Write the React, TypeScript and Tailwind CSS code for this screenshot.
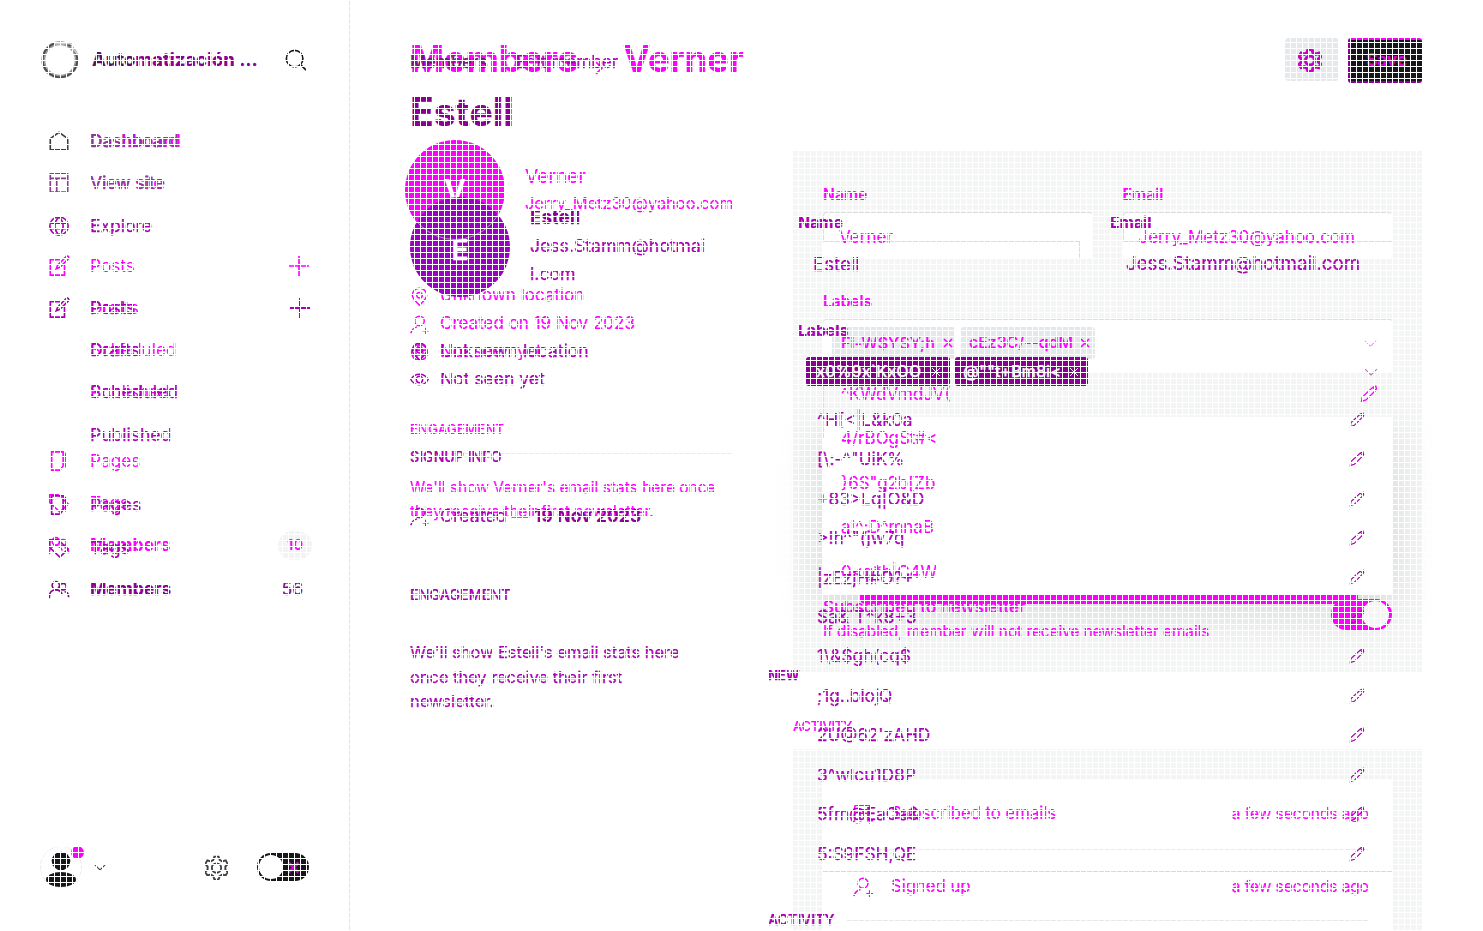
import React from "react";

type IconName =
  | "home" | "view" | "globe" | "posts" | "page" | "tag" | "members" | "plus"
  | "search" | "gear" | "pin" | "user" | "eye" | "pencil" | "down" | "right" | "close" | "mail";

const drawings: Record<IconName, React.ReactNode> = {
  home: <path d="M2.5 21.5V9.5L12 2.5l9.500 7v12z" />,
  view: <path d="M2.500 2h19v20h-19zM2.500 7h19M9.500 7v15" />,
  globe: <path d="M12 2a10 10 0 1 0 0 20 10 10 0 0 0 0-20zM2.500 9h19M2.500 15h19M12 2c-6 6-6 14 0 20M12 2c6 6 6 14 0 20" />,
  posts: <path d="M14 5H2.500v17H18V11M22 1.500l-1.500-.5L10.500 11 9 15l4-1.500L23 3.500z" />,
  page: <path d="M4 2h12.500v15.500L13 22H4zM19.500 3v16" />,
  tag: <path d="M2 3h9l11 10-9 9L2 11.500zM7 7.500v1" />,
  members: <path d="M8.500 4a4 4 0 1 0 0 8 4 4 0 0 0 0-8zM1.500 22v-2c0-5 3.500-7 7-7s6 2 7 5M16.500 6a3.500 3.500 0 1 0 0 7 3.500 3.500 0 0 0 0-7zM18 15c3 0 4.500 2.500 4.500 6" />,
  plus: <path d="M12 1v22M1 12h22" />,
  search: <path d="M10.500 1.500a9 9 0 1 0 0 18 9 9 0 0 0 0-18zM17 17l6 6" />,
  gear: <path d="M10 1.500h4l1 3.200 2.600 1.500 3.200-1 2 3.600-2.300 2.200v3l2.300 2.200-2 3.500-3.200-.9L15 20.300l-1 3.200h-4l-1-3.200-2.600-1.500-3.200.9-2-3.500L3.500 14v-3L1.200 8.800l2-3.600 3.200 1L9 4.700zM12 8a4.500 4.500 0 1 0 0 9 4.500 4.500 0 0 0 0-9z" />,
  pin: <path d="M12 1.500c-5.500 0-9 4-9 9S8.500 19 12 23c3.500-4 9-7.500 9-12.500s-3.500-9-9-9zM12 7a3.500 3.500 0 1 0 0 7 3.500 3.500 0 0 0 0-7z" />,
  user: <path d="M12 1.500a6 6 0 1 0 0 12 6 6 0 0 0 0-12zM1 23c1-4 4-7 8-8M16 20h8M20 16v8" />,
  eye: <path d="M1 12c5-9 17-9 22 0-5 9-17 9-22 0zM12 8a4 4 0 1 0 0 8 4 4 0 0 0 0-8z" />,
  pencil: <path d="M2 22l1-6L17 3l4-1.500L22 5l-1 2L8 20zM17 3l4 4" />,
  down: <path d="M2 7l10 10L22 7" />,
  right: <path d="M7 2l10 10L7 22" />,
  close: <path d="M4 4l16 16M20 4L4 20" />,
  mail: <path d="M2 20V4c0-2 1-2.500 3-2.500h15V14M6 7h11M6 11h11M17 20h7M20.500 16v8" />,
};

function Icon({ name, className, weight = 1.8 }: { name: IconName; className: string; weight?: number }) {
  return (
    <svg viewBox="0 0 24 24" fill="none" stroke="currentColor" strokeWidth={weight} className={`shrink-0 ${className}`}>
      {drawings[name]}
    </svg>
  );
}

function NavRow({ icon, label, className = "", iconClass = "", end }: {
  icon?: IconName; label: string; className?: string; iconClass?: string; end?: React.ReactNode;
}) {
  return (
    <li className={`flex h-[42.250px] items-center pr-[39px] pl-[48px] ${className}`}>
      <span className="flex w-[42px] shrink-0">
        {icon && <Icon name={icon} className={`size-[22px] ${iconClass}`} />}
      </span>
      <span className="grow">{label}</span>
      {end}
    </li>
  );
}

function Meta({ icon, children, className = "" }: { icon: IconName; children: React.ReactNode; className?: string }) {
  return (
    <li className={`flex h-[28px] items-center gap-[11px] whitespace-nowrap ${className}`}>
      <Icon name={icon} className="size-[19px]" weight={1.9} />
      <span>{children}</span>
    </li>
  );
}

function BaseSidebar() {
  return (
    <aside className="flex w-[350px] shrink-0 flex-col border-r border-[#e3e4e6] text-[17.200px]">
      <div className="flex h-[120px] items-center pb-[1px] pl-[41px]">
        <svg viewBox="0 0 38 38" className="size-[38px]" fill="none">
          <circle cx="19" cy="19" r="16.700" stroke="#9a9c9e" strokeWidth="4" />
          <circle cx="19" cy="19" r="17.300" stroke="#484b4d" strokeWidth="1.800" />
          <path d="M13 2.500h18M30 5l7 9" stroke="#c8c9ca" strokeWidth="2" />
        </svg>
        <Icon name="search" className="ml-[206px] size-[22px] text-[#15171a]" />
      </div>
      <ul className="text-[#ff00ff]">
        <NavRow icon="home" iconClass="text-[#394047]" label="Dashboard" className="font-semibold" />
        <NavRow icon="view" label="View site" iconClass="text-[#8a3c8f]" />
        <NavRow icon="posts" label="Posts" className="mt-[40px]" end={<Icon name="plus" className="size-[22px]" />} />
        <NavRow label="Drafts" />
        <NavRow label="Scheduled" />
        <NavRow label="Published" />
        <NavRow icon="page" label="Pages" className="mt-[26px]" />
        <NavRow icon="tag" label="Tags" />
        <NavRow
          icon="members"
          label="Members"
          className="text-[17.400px] font-bold"
          end={<span className="-mr-[2px] flex h-[29px] w-[34px] items-center justify-center rounded-full bg-[#f1f3f4] text-[15px] font-semibold">10</span>}
        />
      </ul>
      <div className="mt-auto mb-[43px] flex h-[42px] items-center pl-[40px]">
        <div className="relative">
          <svg viewBox="0 0 42 42" className="size-[42px]">
            <circle cx="21" cy="21" r="20.500" fill="#fff" stroke="#ededed" />
            <circle cx="21" cy="15" r="9.300" fill="#15171a" />
            <ellipse cx="21" cy="33.500" rx="15" ry="7.500" fill="#15171a" />
          </svg>
          <span className="absolute top-[0px] left-[31px] size-[13px] rounded-full bg-[#ff00ff]" />
        </div>
        <Icon name="down" className="ml-[11px] size-[14px] text-[#394047]" />
        <Icon name="gear" className="ml-[97px] size-[25px] text-[#394047]" />
        <div className="ml-[28px] flex h-[28px] w-[52px] items-center justify-between rounded-full bg-[#15171a] pr-[8px] pl-[2px]">
          <span className="size-[24px] rounded-full bg-white" />
          <Icon name="close" className="size-[15px] text-[#d800d8]" weight={4.5} />
        </div>
      </div>
    </aside>
  );
}

const baseOptions = ["^KWdVmdJV(", "4/rBOgSt#<", '}6S"g2b[Zb', "a!^;D^mnaB", "0<q*h|C4W"];

function Field({ label, value, boxClass }: { label: string; value: string; boxClass: string }) {
  return (
    <div className="w-[270px]">
      <div className="mb-[7px] h-[20px] text-[15.700px] leading-[20px] font-semibold">{label}</div>
      <div className="relative h-[47px] rounded-[4px] bg-white pt-[15px] pl-[16px] text-[17px] leading-[20px] whitespace-nowrap">
        <span className="absolute inset-x-0 top-0 h-[30px] rounded-t-[4px] border border-r-transparent border-b-0 border-[#dcdcdc]" />
        <span className={`absolute left-0 border-[#dcdcdc] ${boxClass}`} />
        <span className="relative">{value}</span>
      </div>
    </div>
  );
}

function BaseMain() {
  return (
    <main className="flex grow flex-col text-[#ff00ff] [-webkit-text-stroke:0.200px_currentColor]">
      <header className="flex h-[151px] justify-between pt-[38px] pr-[61px] pl-[60px]">
        <h1 className="flex h-[42px] items-center text-[36.600px] leading-none font-bold tracking-[-0.200px]">
          Members
          <Icon name="right" className="mt-[18px] mr-[17px] ml-[14px] size-[14px]" weight={3} />
          Verner
        </h1>
        <div className="flex gap-[9px]">
          <div className="flex h-[43px] w-[54px] items-center justify-center rounded-[4px] bg-[#e6e9eb] pr-[4px] text-[#c800c8]">
            <Icon name="gear" className="size-[24px]" weight={3.200} />
          </div>
          <div className="flex h-[45px] w-[74px] items-center justify-center rounded-[3px] border-t-2 border-b-2 border-l-[3px] border-t-[#ff00ff] border-b-[#87008f] border-l-[#87008f] bg-[#15171a] text-[17px] font-bold text-[#e000e0]">
            Save
          </div>
        </div>
      </header>

      <div className="flex grow gap-[61px] pl-[55px]">
        <section className="w-[327px]">
          <div className="-mt-[11px] flex h-[142px]">
            <div className="flex size-[100px] shrink-0 items-center justify-center rounded-full bg-[#ff00ff] text-[30px] font-semibold text-white">
              V
            </div>
            <div className="pt-[23px] pl-[20px]">
              <div className="h-[27px] text-[19.200px] leading-[27px]">Verner</div>
              <div className="text-[16.400px] leading-[27px]">Jerry_Metz30@yahoo.com</div>
            </div>
          </div>
          <ul className="pl-[5px] text-[17px]">
            <Meta icon="pin">Unknown location</Meta>
            <Meta icon="user">Created on 19 Nov 2023</Meta>
            <Meta icon="globe">Not seen yet</Meta>
          </ul>
          <div className="ml-[5px] h-[89px] pt-[53px]">
            <h2 className="h-[35px] border-b border-[#ebebeb] text-[13px] leading-[20px] font-medium tracking-[0.300px]">ENGAGEMENT</h2>
          </div>
          <p className="pt-[21px] pl-[5px] text-[15.500px] leading-[24px] whitespace-nowrap">
            We'll show Verner's email stats here once<br />they receive their first newsletter.
          </p>
        </section>

        <section className="w-[629px]">
          <div className="h-[521px] bg-[#f4f6f6] px-[30px] pt-[34px]">
            <div className="flex gap-[30px]">
              <Field label="Name" value="Verner" boxClass="top-[29px] h-[17px] w-[257px] border-t border-r" />
              <Field label="Email" value="Jerry_Metz30@yahoo.com" boxClass="top-[29px] h-[17px] w-[270px] border-t" />
            </div>
            <div className="mt-[33px] mb-[7px] h-[20px] w-[569px] text-[15.500px] leading-[20px] font-semibold">Labels</div>
            <div className="flex h-[54px] w-[570px] gap-[6px] rounded-t-[4px] border-t border-[#dcdcdc] bg-white pt-[7px] pl-[9px]">
              <span className="flex h-[32px] w-[123px] items-center gap-[7px] rounded-[3px] bg-[#e5e8eb] pl-[9px] text-[16.200px] font-medium whitespace-nowrap">
                Fi-W$YSY;h <Icon name="close" className="size-[12px]" weight={3.500} />
              </span>
              <span className="flex h-[32px] w-[134px] items-center gap-[6px] rounded-[3px] bg-[#e5e8eb] pl-[8px] text-[15.900px] font-medium whitespace-nowrap">
                cEz3C/--qdM <Icon name="close" className="size-[12px]" weight={3.500} />
              </span>
              <Icon name="down" className="mt-[10px] mr-[16px] ml-auto size-[13px]" weight={1.200} />
            </div>
            <div className="relative -mx-[1px] h-[222px] text-[16.900px]">
              <div className="absolute inset-x-0 top-[44px] bottom-0 rounded-b-[3px] bg-white shadow-[0_16px_50px_0px_rgba(0,0,0,0.13)]" />
              <div className="absolute inset-x-0 top-0 h-[44px] bg-[#f3f5f5]" />
              <ul className="relative">
                {baseOptions.map((option, i) => (
                  <li key={option} className="flex h-[44.500px] items-center justify-between pr-[15px] pb-[2px] pl-[19px]">
                    {option}
                    {i === 0 && <Icon name="pencil" className="size-[18px]" />}
                  </li>
                ))}
              </ul>
              <span className="absolute top-0 left-[1px] h-[66px] w-px bg-[#dcdcdc]" />
              <span className="absolute top-[222px] left-[38px] h-[9px] w-[498px] rounded-b-[5px] bg-[#ff00ff]" />
            </div>
            <div className="relative flex justify-between pt-[4px]">
              <div className="-mt-[4px]">
                <div className="h-[24px] text-[17px] leading-[24px] font-medium whitespace-nowrap">Subscribed to newsletter</div>
                <div className="pt-[1px] text-[15.300px] leading-[24px] whitespace-nowrap">If disabled, member will not receive newsletter emails</div>
              </div>
              <div className="flex h-[31px] w-[61px] items-center justify-end rounded-full bg-[#ff00ff] pr-[3px]">
                <span className="size-[27px] rounded-full bg-[#f5f5f5]" />
              </div>
            </div>
          </div>
          <h2 className="h-[77px] pt-[44px] text-[13px] leading-[20px] font-medium tracking-[-0.200px]">ACTIVITY</h2>
          <div className="h-[182px] bg-[#f4f6f6] px-[30px] pt-[30px]">
            <ul className="h-[152px] w-[570px] bg-white px-[24px] text-[16.700px] shadow-[0_0_8px_rgba(0,0,0,0.02)]">
              <li className="ml-[6px] flex h-[71px] items-center border-b border-[#ebebeb]">
                <Icon name="mail" className="mr-[18px] size-[20px]" />
                <span className="grow">Subscribed to emails</span>
                <span className="text-[15.400px]">a few seconds ago</span>
              </li>
              <li className="-mx-[24px] mt-[21px] h-px bg-[#d8d8d8]" />
              <li className="-mt-[20px] ml-[6px] flex h-[70px] items-center">
                <Icon name="user" className="mr-[18px] size-[20px]" />
                <span className="grow">Signed up</span>
                <span className="text-[15.400px]">a few seconds ago</span>
              </li>
              <li className="-mt-[2px] h-px bg-[#e6e8ea]" />
            </ul>
          </div>
        </section>
      </div>
    </main>
  );
}

const topOptions = [
  "^H[<|L&k0a", '[\\:-^"UiK%', "+83>Lq|O&D", '>!h^"(jw7q', "|zEzjH#O?+", "$a&`T*k8+3",
  "1\\&$gh(cq$", ";1g..blojQ", "2U@62'zAHD", "3^wIcu1D8P", "5fm@EaOa&", "5:S9FSH,QE",
];

function TopLayer() {
  return (
    <div className="absolute inset-0 flex text-[17.300px] text-[#a900b4] [-webkit-text-stroke:0.250px_currentColor]">
      <div className="w-[350px] shrink-0">
        <div className="flex h-[120px] items-center pb-[1px] pl-[92px] text-[18.500px] font-bold text-[#8c0091]">
          <span className="text-[#5c1060]">Auto</span>matización ...
        </div>
        <ul className="text-[17.500px]">
          <NavRow label="Dashboard" className="text-[17.200px] text-[#8b3a90]" />
          <NavRow label="View site" className="text-[17.600px] text-[#8b3a90]" />
          <NavRow icon="globe" label="Explore" />
          <NavRow icon="posts" label="Posts" className="mt-[40px]" end={<Icon name="plus" className="size-[22px]" weight={2.200} />} />
          <NavRow label="Drafts" />
          <NavRow label="Scheduled" />
          <NavRow label="Published" />
          <NavRow icon="page" label="Pages" className="mt-[28px]" />
          <NavRow icon="tag" label="Tags" className="pt-[2px]" />
          <NavRow icon="members" label="Members" className="font-bold text-[#8c0091]" end={<span className="mr-[8px] font-normal">56</span>} />
        </ul>
      </div>

      <div className="w-[418px] shrink-0 pl-[60px]">
        <div className="flex h-[84px] items-center pt-[39px] text-[17.200px]">
          <span className="font-medium text-[#69206d]">Members</span>
          <Icon name="right" className="mr-[8px] ml-[12px] size-[8px]" weight={3} />
          Edit member
        </div>
        <h1 className="flex h-[55px] items-center text-[39px] leading-none font-bold text-[#8c0091]">Estell</h1>
        <div className="mt-[58px] flex h-[140px] gap-[20px]">
          <div className="relative flex size-[100px] shrink-0 items-center justify-center overflow-hidden rounded-full bg-[#9b00c5] pt-[6px] text-[29px] font-semibold text-white">
            <span className="absolute -top-[57px] -left-[5px] size-[100px] rounded-full border border-[#a3a3a3]" />
            E
          </div>
          <div className="w-[177px] pt-[7px]">
            <div className="text-[18.800px] leading-[28px] font-bold text-[#8c0091]">Estell</div>
            <div className="text-[17.600px] leading-[28px]">Jess.Stamm@hotmai<br />l.com</div>
          </div>
        </div>
        <ul className="text-[17.500px]">
          <Meta icon="pin">Unknown location</Meta>
          <Meta icon="eye">Not seen yet</Meta>
        </ul>
        <h2 className="h-[109px] pt-[54px] text-[14.200px] leading-[20px] font-medium">SIGNUP INFO</h2>
        <ul className="text-[17.700px]">
          <Meta icon="user">Created — <b className="font-semibold text-[#8c0091]">19 Nov 2023</b></Meta>
        </ul>
        <h2 className="pt-[55px] text-[14.300px] leading-[20px] font-medium">ENGAGEMENT</h2>
        <p className="w-[290px] pt-[35px] text-[16.400px] leading-[24.500px]">
          We'll show Estell's email stats here<br />once they receive their first<br />newsletter.
        </p>
      </div>

      <div className="flex w-[655px] shrink-0 flex-col pt-[213px]">
        <div className="flex h-[98px] pl-[30px]">
          <div className="w-[312px]">
            <div className="text-[15.700px] leading-[20px] font-bold">Name</div>
            <div className="pt-[21px] pl-[15px] text-[18.600px] leading-[20px]">Estell</div>
          </div>
          <div>
            <div className="text-[15.700px] leading-[20px] font-bold">Email</div>
            <div className="pt-[21px] pl-[16px] text-[18.700px] leading-[20px]">Jess.Stamm@hotmail.com</div>
          </div>
        </div>
        <div className="h-[46px] pt-[10px] pl-[30px] text-[15.700px] leading-[20px] font-bold">Labels</div>
        <div className="flex h-[43px] items-start gap-[5px] pl-[38px] text-[16.200px] text-[#f4f6f6]">
          <span className="flex h-[29px] w-[144px] items-center justify-between rounded-[3px] bg-[#87008f] pr-[8px] pl-[10px] font-medium whitespace-nowrap">
            x0%9x`KxOO <Icon name="close" className="size-[12px]" weight={2} />
          </span>
          <span className="flex h-[29px] w-[133px] items-center justify-between rounded-[3px] bg-[#87008f] px-[8px] font-medium whitespace-nowrap">
            @""t+Bm8i&lt; <Icon name="close" className="size-[12px]" weight={2} />
          </span>
          <Icon name="down" className="mt-[8px] mr-[45px] ml-auto size-[14px] text-[#b070b4]" weight={1.800} />
        </div>
        <div className="relative h-[506px]">
          <ul className="pl-[49px]">
            {topOptions.map((option) => (
              <li key={option} className="flex h-[39.450px] items-center justify-between pr-[58px]">
                {option}
                <Icon name="pencil" className="size-[16px]" />
              </li>
            ))}
          </ul>
          <div className="absolute top-[265px] left-0 text-[13.200px] leading-[20px] font-bold tracking-[-0.200px]">NEW</div>
        </div>
        <h2 className="pt-[4px] text-[14px] leading-[20px] font-semibold">ACTIVITY</h2>
      </div>
    </div>
  );
}

export default function App() {
  return (
    <div className="relative flex h-[931px] w-[1483px] overflow-hidden bg-white font-['Inter',sans-serif]">
      <BaseSidebar />
      <BaseMain />
      <TopLayer />
      <div className="pointer-events-none absolute inset-0 bg-[linear-gradient(to_right,#fff_1px,transparent_1px),linear-gradient(to_bottom,#fff_1px,transparent_1px)] bg-[size:6px_6px]" />
    </div>
  );
}
